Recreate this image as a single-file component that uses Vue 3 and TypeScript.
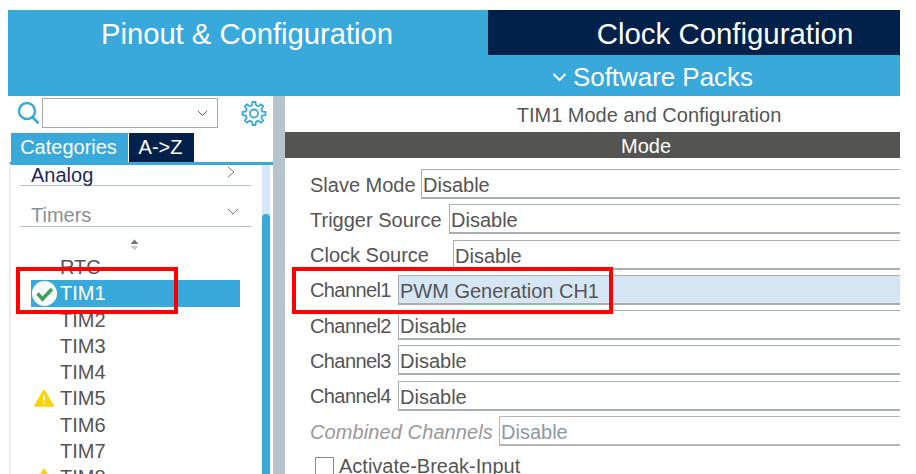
<script setup lang="ts">
const timers: { name: string; status?: 'ok' | 'warn' }[] = [
  { name: 'RTC' },
  { name: 'TIM1', status: 'ok' },
  { name: 'TIM2' },
  { name: 'TIM3' },
  { name: 'TIM4' },
  { name: 'TIM5', status: 'warn' },
  { name: 'TIM6' },
  { name: 'TIM7' },
  { name: 'TIM8', status: 'warn' },
]

const modes = [
  { label: 'Slave Mode', value: 'Disable', left: 111 },
  { label: 'Trigger Source', value: 'Disable', left: 139 },
  { label: 'Clock Source', value: 'Disable', left: 143 },
  { label: 'Channel1', value: 'PWM Generation CH1', left: 88, active: true, tight: true },
  { label: 'Channel2', value: 'Disable', left: 88, tight: true },
  { label: 'Channel3', value: 'Disable', left: 88, tight: true },
  { label: 'Channel4', value: 'Disable', left: 88, tight: true },
  { label: 'Combined Channels', value: 'Disable', left: 189, disabled: true },
]

function gearPath(): string {
  const cx = 13
  const cy = 12.5
  const pts: string[] = []
  const teeth = 8
  for (let i = 0; i < teeth; i++) {
    const a = (i * Math.PI * 2) / teeth
    const step = (Math.PI * 2) / teeth
    const seq: [number, number][] = [
      [8.2, a - step * 0.5],
      [8.8, a - step * 0.27],
      [11.6, a - step * 0.17],
      [11.6, a + step * 0.17],
      [8.8, a + step * 0.27],
    ]
    for (const [r, t] of seq) {
      pts.push(`${(cx + r * Math.cos(t)).toFixed(2)} ${(cy + r * Math.sin(t)).toFixed(2)}`)
    }
  }
  return 'M' + pts.join('L') + 'Z'
}
const gear = gearPath()
</script>

<template>
  <div class="page">
    <div class="frame">
      <div class="tabs">
        <div class="tab tab-on">Pinout &amp; Configuration</div>
        <div class="tab tab-off">Clock Configuration</div>
      </div>
      <div class="packs">
        <svg class="packs-chev" width="16" height="12" viewBox="0 0 16 12">
          <path d="M1.5 3 L7.5 9 L13.5 3" fill="none" stroke="#fff" stroke-width="2" />
        </svg>
        <span>Software Packs</span>
      </div>

      <div class="body">
        <aside class="side">
          <div class="search">
            <svg class="lens" width="23" height="24" viewBox="0 0 23 24">
              <circle cx="10" cy="10" r="8" fill="none" stroke="#39a9db" stroke-width="2.4" />
              <path d="M15.5 16 L21.5 22.5" stroke="#39a9db" stroke-width="2.6" />
            </svg>
            <div class="combo">
              <svg width="11" height="7" viewBox="0 0 11 7">
                <path d="M1 1 L5.5 5.5 L10 1" fill="none" stroke="#666" stroke-width="1" />
              </svg>
            </div>
            <svg class="gear" width="26" height="25" viewBox="0 0 26 25">
              <path :d="gear" fill="none" stroke="#39a9db" stroke-width="1.8" stroke-linejoin="round" />
              <circle cx="13" cy="12.5" r="4" fill="none" stroke="#39a9db" stroke-width="1.8" />
            </svg>
          </div>
          <div class="cat-tabs">
            <div class="cat cat-on">Categories</div>
            <div class="cat cat-off">A-&gt;Z</div>
          </div>
          <div class="list-wrap">
            <div class="list">
              <div class="group group-open">
                <span>Analog</span>
                <svg width="8" height="12" viewBox="0 0 8 12">
                  <path d="M1 1 L7 6 L1 11" fill="none" stroke="#777" stroke-width="1" />
                </svg>
              </div>
              <div class="group group-timers">
                <span>Timers</span>
                <svg width="12" height="8" viewBox="0 0 12 8">
                  <path d="M1 1 L6 6 L11 1" fill="none" stroke="#777" stroke-width="1" />
                </svg>
              </div>
              <div class="sort">
                <svg width="9" height="12" viewBox="0 0 9 12">
                  <path d="M4.5 0.5 L8.5 5 L0.5 5 Z" fill="#777" />
                  <path d="M4.5 11.5 L8.5 7 L0.5 7 Z" fill="#ccc" />
                </svg>
              </div>
              <div
                v-for="t in timers"
                :key="t.name"
                class="item"
                :class="{ selected: t.status === 'ok' }"
              >
                <svg v-if="t.status === 'ok'" class="ico-ok" width="25" height="25" viewBox="0 0 25 25">
                  <circle cx="12.5" cy="12.5" r="12.5" fill="#fff" />
                  <path d="M5.5 12.5 L10.5 18 L20 8" fill="none" stroke="#3da35d" stroke-width="3.6" />
                </svg>
                <svg v-if="t.status === 'warn'" class="ico-warn" width="20" height="18" viewBox="0 0 20 18">
                  <path d="M10 2 L18.5 16.5 L1.5 16.5 Z" fill="#ffd200" stroke="#ffd200" stroke-width="2.4" stroke-linejoin="round" />
                  <path d="M10 6 L10 11.5 M10 13 L10 15" stroke="#fff" stroke-width="1.8" />
                </svg>
                <span>{{ t.name }}</span>
              </div>
            </div>
            <div class="scroll"><div class="thumb"></div></div>
          </div>
        </aside>
        <div class="split"></div>
        <main class="panel">
          <div class="inner">
            <div class="title">TIM1 Mode and Configuration</div>
            <div class="bar">Mode</div>
            <div class="rows">
              <div v-for="m in modes" :key="m.label" class="row" :class="{ off: m.disabled }">
                <span class="lab" :class="{ tight: m.tight }" :style="{ width: m.left + 'px' }">{{ m.label }}</span>
                <div class="sel" :class="{ act: m.active }">{{ m.value }}</div>
              </div>
              <label class="check">
                <span class="box"></span>
                <span>Activate-Break-Input</span>
              </label>
            </div>
          </div>
        </main>
      </div>
    </div>
    <div class="mark mark-a"></div>
    <div class="mark mark-b"></div>
  </div>
</template>

<style scoped>
.page {
  position: relative;
  width: 916px;
  height: 474px;
  overflow: hidden;
  background: #fff;
  padding: 10px 16px 0 8px;
  box-sizing: border-box;
  font-family: "Liberation Sans", Arial, sans-serif;
  color: #555;
  font-size: 20px;
}
.frame {
  width: 892px;
  height: 464px;
  overflow: hidden;
  display: flex;
  flex-direction: column;
}
.tabs {
  display: flex;
  flex: none;
  height: 45px;
  width: 954px;
}
.tab {
  flex: none;
  display: flex;
  align-items: center;
  justify-content: center;
  color: #fff;
  font-size: 29.4px;
  padding-top: 3px;
  box-sizing: border-box;
}
.tab-on { background: #39a9db; width: 480px; font-size: 29.2px; padding-right: 2px; }
.tab-off { background: #01214a; width: 474px; }
.packs {
  flex: none;
  height: 41px;
  background: #39a9db;
  color: #fff;
  font-size: 25.9px;
  display: flex;
  align-items: center;
  gap: 5px;
  padding: 4px 0 0 544px;
  box-sizing: border-box;
}
.packs-chev { flex: none; margin-top: -2px; }
.body {
  flex: 1;
  display: flex;
  min-height: 0;
}
.side {
  width: 265px;
  flex: none;
  display: flex;
  flex-direction: column;
  min-height: 0;
}
.search {
  display: flex;
  align-items: center;
  height: 30px;
  margin-top: 2px;
  padding-left: 9px;
  flex: none;
}
.lens { flex: none; margin-right: 2px; }
.combo {
  width: 176px;
  height: 30px;
  box-sizing: border-box;
  border: 1px solid #a9a9a9;
  display: flex;
  align-items: center;
  justify-content: flex-end;
  padding-right: 9px;
  flex: none;
}
.gear { flex: none; margin-left: 23px; margin-top: 1px; }
.cat-tabs {
  display: flex;
  flex: none;
  gap: 1px;
  margin: 5px 0 0 3px;
  height: 29px;
}
.cat {
  color: #fff;
  height: 29px;
  line-height: 29px;
  text-align: center;
  box-sizing: border-box;
  padding-right: 2px;
}
.cat-on { width: 117px; background: #39a9db; }
.cat-off { width: 65px; background: #01214a; }
.list-wrap {
  flex: 1;
  min-height: 0;
  margin-left: 1px;
  display: flex;
  border-top: 3px solid #39a9db;
  border-left: 2px solid #efefef;
  overflow: hidden;
}
.list {
  width: 251px;
  flex: none;
}
.group {
  height: 20px;
  margin-left: 9px;
  width: 231px;
  border-bottom: 1px solid #b9c3cf;
  display: flex;
  align-items: center;
  justify-content: space-between;
  padding: 0 16px 0 11px;
  box-sizing: border-box;
}
.group-open { color: #1d2a5c; height: 21px; }
.group-open svg { margin-top: -6px; }
.group-timers {
  color: #8a8f96;
  height: 30px;
  margin-top: 11px;
  padding-top: 8px;
  padding-right: 12px;
}
.group-timers svg { margin-top: -8px; }
.sort {
  height: 15px;
  margin-top: 12px;
  padding-left: 119px;
  line-height: 0;
}
.item {
  position: relative;
  height: 26.3px;
  line-height: 26.3px;
  margin-left: 20px;
  width: 209px;
  padding-left: 29px;
  box-sizing: border-box;
}
.selected {
  background: #39a9db;
  color: #fff;
}
.ico-ok {
  position: absolute;
  left: 1px;
  top: 1px;
}
.ico-warn {
  position: absolute;
  left: 3px;
  top: 4px;
}
.scroll {
  width: 8px;
  flex: none;
  background: #d5e8f6;
  padding-top: 49px;
}
.thumb {
  height: 300px;
  background: #39a9db;
  border-radius: 4px 4px 0 0;
}
.split {
  width: 12px;
  flex: none;
  background: #b8c4cc;
}
.panel {
  flex: 1;
  min-width: 0;
  overflow: hidden;
}
.inner { width: 722px; }
.title {
  height: 36px;
  line-height: 38px;
  text-align: center;
  padding-left: 6px;
  box-sizing: border-box;
}
.bar {
  height: 26px;
  line-height: 28px;
  background: #545553;
  color: #fff;
  text-align: center;
  box-sizing: border-box;
}
.rows {
  padding: 11px 0 0 25px;
  display: flex;
  flex-direction: column;
  gap: 5.3px;
}
.row {
  display: flex;
  align-items: center;
  height: 30px;
}
.lab {
  flex: none;
  white-space: nowrap;
  padding-top: 2px;
  box-sizing: border-box;
}
.tight { letter-spacing: -0.6px; }
.sel {
  flex: 1;
  height: 30px;
  line-height: 30px;
  box-sizing: border-box;
  border: 1px solid #a9aeb2;
  border-width: 1px 1px 2px 1px;
  padding-left: 1px;
  color: #555;
}
.act {
  background: #d6e6f4;
}
.off .lab {
  color: #999;
  font-style: italic;
  letter-spacing: 0.1px;
}
.off .sel { color: #8c99a5; border-color: #b5b5b5; }
.check {
  display: flex;
  align-items: center;
  gap: 5px;
  height: 20px;
  margin-top: 5px;
  padding-left: 5px;
}
.box {
  width: 19px;
  height: 19px;
  box-sizing: border-box;
  border: 1px solid #8a8a8a;
  flex: none;
}
.mark {
  position: absolute;
  border: 4px solid #fe0000;
  box-sizing: border-box;
  top: 267px;
  height: 47px;
}
.mark-a { left: 16px; width: 162px; }
.mark-b { left: 292px; width: 321px; }
</style>
